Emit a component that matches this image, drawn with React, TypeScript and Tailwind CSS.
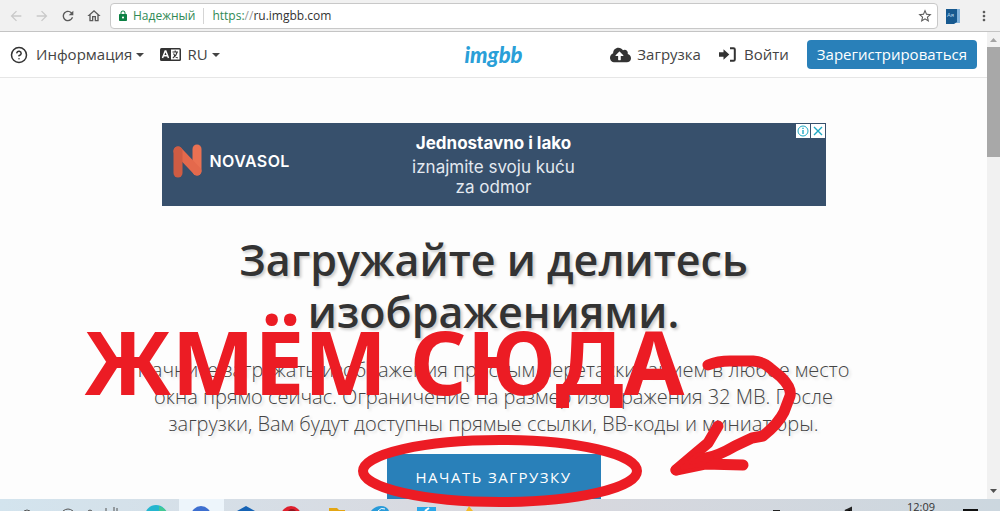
import type { ReactNode } from "react";
import { CircleHelp } from "lucide-react";
import { FaCloudUploadAlt } from "react-icons/fa";
import {
    MdArrowBack,
    MdArrowForward,
    MdLock,
    MdMoreVert,
    MdOutlineHome,
    MdRefresh,
    MdStarBorder
} from "react-icons/md";

function BrowserBar() {
    return (
        <div className="flex h-8 shrink-0 items-center border-b border-[#c4c4c4] bg-[#f1f1f1] pr-2 pl-2 text-[#5a5a5a]">
            <div className="flex items-center gap-2.5 pr-2">
                <button aria-label="Назад" className="text-[#c9c9c9]"><MdArrowBack className="size-4" /></button>
                <button aria-label="Вперёд" className="text-[#c9c9c9]"><MdArrowForward className="size-4" /></button>
                <button aria-label="Обновить"><MdRefresh className="size-4" /></button>
                <button aria-label="Домой"><MdOutlineHome className="size-4" /></button>
            </div>
            <div className="flex h-[26px] min-w-0 flex-1 items-center rounded-sm border border-[#c8c8c8] bg-white pr-1 pl-1.5 text-xs">
                <MdLock className="size-3 shrink-0 text-[#0b8043]" />
                <span className="ml-1 text-[#2f8a55]">Надежный</span>
                <span className="mx-2 h-4 w-px bg-[#d5d5d5]" />
                <label htmlFor="address" className="text-[#2f8a55]">https:<span className="text-[#999]">//</span></label>
                <input id="address" defaultValue="ru.imgbb.com" className="min-w-0 flex-1 text-[#333] outline-none" />
                <button aria-label="Добавить в закладки"><MdStarBorder className="size-4" /></button>
            </div>
            <div className="flex items-center gap-4 pl-2">
                <button aria-label="Словарь">
                    <svg viewBox="0 0 14 16" className="h-4 w-3.5">
                        <path d="M5 1h9v14H5z" fill="#83b3dc" />
                        <path d="M0 1h11v13L8 16H0z" fill="#17598f" />
                        <text x="1" y="9" fontSize="6" fill="#b8d7ef">Aя</text>
                    </svg>
                </button>
                <button aria-label="Меню"><MdMoreVert className="size-4" /></button>
            </div>
        </div>
    );
}

function Caret() {
    return <svg viewBox="0 0 8 4" className="h-1 w-2" fill="#444"><path d="M0 0h8L4 4z" /></svg>;
}

function LanguageIcon() {
    return (
        <svg viewBox="0 0 21 13" className="h-[13px] w-[21px]" fill="none">
            <rect width="21" height="13" rx="1.5" fill="#333" />
            <rect x="11" y="1.5" width="8.5" height="10" fill="#fff" />
            <path d="M2.5 10 5.2 3h.6L8.500 10M3.600 7.800h3.800" stroke="#fff" strokeWidth="1.500" />
            <path d="M12.500 4h5.500M15.200 2.500v1.500M17 4.500c-.6 2.500-2.200 4.500-4.200 5.500M13.500 5.500c.8 2 2.300 3.700 4.200 4.500" stroke="#333" strokeWidth="1.100" />
        </svg>
    );
}

function SignInIcon() {
    return (
        <svg viewBox="0 0 17 15" className="h-[15px] w-[17px]">
            <path d="M0 5.300h4.500V2.200L10.300 7.500 4.500 12.800V9.700H0z" fill="#333" />
            <path d="M11 1.200h3.500q1.300 0 1.300 1.300v10q0 1.300-1.300 1.300H11" fill="none" stroke="#333" strokeWidth="2" />
        </svg>
    );
}

function SiteHeader() {
    return (
        <header className="grid h-[46px] grid-cols-[1fr_auto_1fr] items-center border-b border-[#e6e6e6] bg-white px-2.5 text-[15px] text-[#444]">
            <nav className="flex items-center gap-4">
                <button className="flex items-center gap-2">
                    <CircleHelp className="size-[18px] text-[#333]" strokeWidth={2} />
                    <span className="flex items-center gap-1">Информация <Caret /></span>
                </button>
                <button className="flex items-center gap-1.5">
                    <LanguageIcon />
                    <span className="flex items-center gap-1">RU <Caret /></span>
                </button>
            </nav>
            <a href="#" className="font-['Lato'] text-[22px] leading-none font-black text-[#2a9fd8] italic">imgbb</a>
            <nav className="flex items-center justify-end gap-[18px]">
                <a href="#upload" className="flex items-center gap-1.5">
                    <FaCloudUploadAlt className="h-[18px] w-[21px] text-[#333]" />
                    Загрузка
                </a>
                <a href="#login" className="flex items-center gap-2"><SignInIcon />Войти</a>
                <a href="#signup" className="flex h-[29px] items-center rounded-sm bg-[#2980b9] px-2.5 text-white">
                    Зарегистрироваться
                </a>
            </nav>
        </header>
    );
}

function NovasolMark() {
    return (
        <svg viewBox="0 0 29 36" className="h-9 w-[29px]" fill="none" strokeWidth="9" strokeLinecap="round">
            <path d="M24 6v22" stroke="#ea7152" />
            <path d="M5 8l19 20" stroke="#e4694c" />
            <path d="M5 8v22" stroke="#cf5c43" />
        </svg>
    );
}

function AdBanner() {
    return (
        <aside className="relative grid h-[83px] w-full max-w-[664px] grid-cols-3 items-center bg-[#37506c] text-white">
            <div className="flex items-center gap-2 pb-2 pl-[11px]">
                <NovasolMark />
                <span className="font-['Inter'] text-base font-semibold tracking-wide">NOVASOL</span>
            </div>
            <div className="pt-px text-center font-['Inter'] text-[17px] leading-5 whitespace-nowrap">
                <p className="mb-1 font-bold">Jednostavno i lako</p>
                <p className="text-[#e3e9f0]">iznajmite svoju kuću<br />za odmor</p>
            </div>
            <div className="absolute top-px right-px flex gap-px">
                <button aria-label="О рекламе" className="bg-white">
                    <svg viewBox="0 0 14 14" className="size-3.5" fill="none" stroke="#1fa9c4">
                        <circle cx="7" cy="7" r="5" />
                        <path d="M7 6v4M7 3.800v1.200" strokeWidth="1.400" />
                    </svg>
                </button>
                <button aria-label="Закрыть рекламу" className="bg-white">
                    <svg viewBox="0 0 14 14" className="size-3.5" stroke="#1fa9c4" strokeWidth="1.400">
                        <path d="M3 3l8 8M11 3l-8 8" />
                    </svg>
                </button>
            </div>
        </aside>
    );
}

function Hero() {
    return (
        <main className="flex flex-col items-center px-4 pt-[45px] text-center">
            <AdBanner />
            <h1 className="mt-7 max-w-[600px] text-[43px] leading-[52px] font-semibold text-[#333] text-shadow-[2px_2px_3px_#00000033]">
                Загружайте и делитесь изображениями.
            </h1>
            <p className="mt-[18px] max-w-[740px] text-xl leading-[27px] font-light text-[#444] text-shadow-[2px_2px_3px_#00000026]">
                Начните загружать изображения простым перетаскиванием в любое место окна прямо сейчас.
                Ограничение на размер изображения 32 MB. После загрузки, Вам будут доступны прямые ссылки,
                BB-коды и миниатюры.
            </p>
            <button className="mt-[17px] h-[46px] w-[214px] bg-[#2980b9] text-[15px] tracking-widest text-white uppercase">
                Начать загрузку
            </button>
        </main>
    );
}

function Scrollbar() {
    return (
        <div className="flex w-[13px] shrink-0 flex-col items-center bg-[#f1f1f1]">
            <svg viewBox="0 0 13 15" className="h-[15px] w-[13px] shrink-0" fill="#a3a3a3"><path d="M3 10h7L6.500 6z" /></svg>
            <div className="h-[110px] w-full bg-[#a8a8a8]" />
            <svg viewBox="0 0 13 15" className="mt-auto h-[15px] w-[13px] shrink-0" fill="#505050"><path d="M3 5h7L6.500 9z" /></svg>
        </div>
    );
}

function TaskSlot({ label, active, children }: { label: string; active?: boolean; children: ReactNode }) {
    return (
        <button aria-label={label} className={active ? "w-[45px] bg-[#edf5fb]" : "w-[45px]"}>
            <svg viewBox="0 0 45 12" className="h-3 w-[45px]">{children}</svg>
        </button>
    );
}

function Taskbar() {
    return (
        <footer className="flex h-3 shrink-0 overflow-hidden bg-linear-to-r from-[#d3e4ee] via-[#d9d8de] to-[#ccd7df]">
            <svg viewBox="0 0 134 12" className="h-3 w-[134px] shrink-0" fill="none" stroke="#555">
                <path d="M24 12q3-2 6 0M63 12q5-4 10 0M88 12q2-2 4 0M106 9v3M114 8v4M117 9v3" />
            </svg>
            <TaskSlot label="Edge">
                <circle cx="22" cy="17" r="11" fill="#25b6cf" />
                <path d="M25 7q7 2 8 7h-8z" fill="#42c994" />
            </TaskSlot>
            <TaskSlot label="Браузер" active><circle cx="22" cy="17" r="10" fill="#3d6fd0" /></TaskSlot>
            <TaskSlot label="Virtual PC"><path d="M13 12l9-5 9 5z" fill="#1563b5" /></TaskSlot>
            <TaskSlot label="Opera">
                <circle cx="22" cy="17" r="10" fill="#df1f2d" />
                <circle cx="23" cy="15" r="5" fill="#931420" />
            </TaskSlot>
            <TaskSlot label="Проводник"><path d="M15 9h8l2 2h6v1H15z" fill="#e4a613" /></TaskSlot>
            <TaskSlot label="Почта">
                <path d="M12 12q4-5 10-5 6 0 8 5z" fill="#299bd9" />
                <path d="M19 12q3-4 7-2" stroke="#fff" fill="none" />
            </TaskSlot>
            <TaskSlot label="Задачи">
                <path d="M13 8h19v4H13z" fill="#29a7e8" />
                <path d="M21 12l4-3" stroke="#fff" strokeWidth="2" />
            </TaskSlot>
            <TaskSlot label="Paint"><path d="M17 12l3-5 4 5z" fill="#f3bb28" /></TaskSlot>
            <div className="ml-auto flex shrink-0 gap-7 pr-[22px]">
                <svg viewBox="0 0 110 12" className="h-3 w-[110px]" stroke="#222" strokeWidth="2">
                    <path d="M4 12h7M76 12l6-3v3" />
                </svg>
                <time className="text-[11px] leading-4 text-[#333]">12:09</time>
                <svg viewBox="0 0 15 12" className="h-3 w-[15px]"><path d="M0 10h15v2H0z" fill="#111" /></svg>
            </div>
        </footer>
    );
}

// Hand-drawn hint laid over the window
function Annotation() {
    return (
        <div className="pointer-events-none absolute inset-0 flex justify-center overflow-hidden">
            <svg viewBox="0 0 1000 511" className="h-[511px] w-[1000px] shrink-0" fill="none" stroke="#ec1c24" strokeLinecap="round" strokeLinejoin="round">
                <text x="84" y="395" className="font-['Noto_Sans',sans-serif] text-[88px] font-bold" fill="#ec1c24" stroke="none">ЖМЁМ СЮДА</text>
                <ellipse cx="500" cy="471" rx="137" ry="31" strokeWidth="10" />
                <path
                    d="M708 365Q718 361 730 361L753 361Q764 362 770 368L781 377Q792 388 790 396L784 412Q778 424 763 436L752 438L735 446Q718 456 706 458L676 470"
                    strokeWidth="11"
                />
                <path d="M718 426L708 443L696 453L676 470L705 464L743 465" strokeWidth="11" />
                <path d="M698 454L712 457L700 465L682 468z" fill="#ec1c24" strokeWidth="4" />
            </svg>
        </div>
    );
}

export default function App() {
    return (
        <div className="relative flex h-screen flex-col overflow-hidden bg-[#fdfdfd] font-['Open_Sans',sans-serif]">
            <BrowserBar />
            <div className="flex min-h-0 flex-1">
                <div className="min-w-0 flex-1 overflow-hidden">
                    <SiteHeader />
                    <Hero />
                </div>
                <Scrollbar />
            </div>
            <Taskbar />
            <Annotation />
        </div>
    );
}
